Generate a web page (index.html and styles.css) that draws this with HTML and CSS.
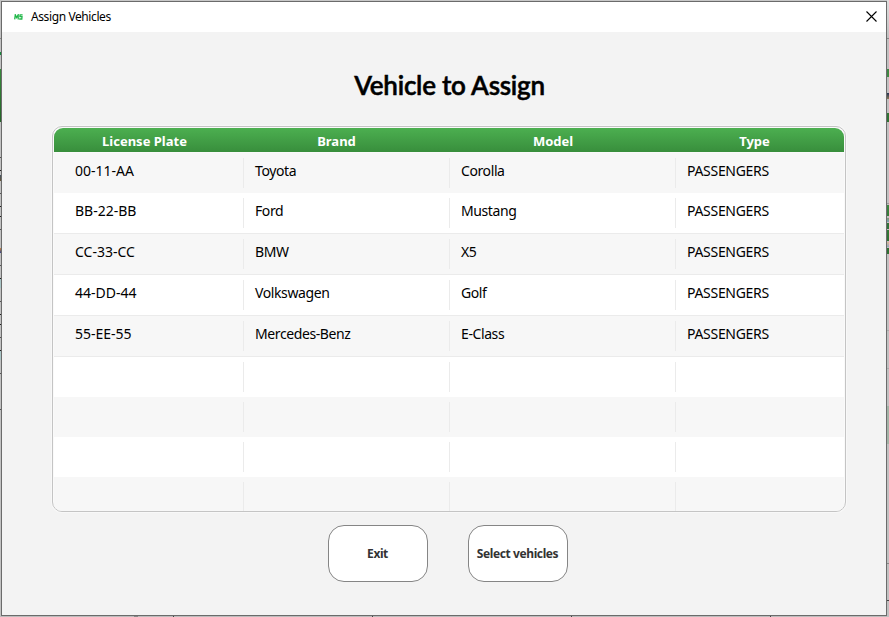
FILE: index.html
```html
<!DOCTYPE html>
<html lang="en">
<head>
<meta charset="utf-8">
<title>Assign Vehicles</title>
<link rel="stylesheet" href="styles.css">
</head>
<body>
<div class="edge edge-left"></div>
<div class="edge edge-right"></div>
<div class="edge edge-bottom"></div>
<main class="window">
  <header class="titlebar">
    <svg class="logo" width="9" height="6" viewBox="0 0 9 6" fill="none" stroke="#22b84a" stroke-width="1.3"><path d="M.7 5.4 1.3.8 2.6 3.6 4.2.8V5.4M8.6.8H6.1L5.9 2.7H8L7.8 5H5.2"/></svg>
    <span class="caption">Assign Vehicles</span>
    <svg class="close" width="11" height="11" viewBox="0 0 11 11" fill="none" stroke="#000" stroke-width="1.1"><path d="M.5.5l10 10M10.5.5l-10 10"/></svg>
  </header>
  <h1 class="heading"><span>Vehicle to Assign</span></h1>
  <section class="table">
    <div class="row head"><span>License Plate</span><span>Brand</span><span>Model</span><span>Type</span></div>
    <div class="row odd"><span>00-11-AA</span><span>Toyota</span><span>Corolla</span><span class="type">PASSENGERS</span></div>
    <div class="row line"><span>BB-22-BB</span><span>Ford</span><span>Mustang</span><span class="type">PASSENGERS</span></div>
    <div class="row odd line"><span>CC-33-CC</span><span>BMW</span><span>X5</span><span class="type">PASSENGERS</span></div>
    <div class="row line"><span>44-DD-44</span><span>Volkswagen</span><span>Golf</span><span class="type">PASSENGERS</span></div>
    <div class="row odd line"><span>55-EE-55</span><span>Mercedes-Benz</span><span>E-Class</span><span class="type">PASSENGERS</span></div>
    <div class="row"><span></span><span></span><span></span><span></span></div>
    <div class="row odd"><span></span><span></span><span></span><span></span></div>
    <div class="row"><span></span><span></span><span></span><span></span></div>
    <div class="row odd last"><span></span><span></span><span></span><span></span></div>
  </section>
  <div class="actions">
    <button>Exit</button>
    <button>Select vehicles</button>
  </div>
</main>
</body>
</html>
```
FILE: styles.css
```css
* { box-sizing: border-box; }
body {
  margin: 0;
  width: 889px;
  height: 617px;
  padding: 1px 2px 1px 1px;
  overflow: hidden;
  position: relative;
  background: #c8c8c8;
  font-family: "Noto Sans", "Open Sans", sans-serif;
  color: #000;
}
.edge { position: absolute; }
.edge-left {
  left: 0; top: 0; width: 2px; height: 617px;
  background:
    linear-gradient(#555, #555) 0 157px / 2px 1px,
    linear-gradient(#222, #222) 0 170px / 2px 1px,
    linear-gradient(#456, #653) 0 175px / 2px 6px,
    linear-gradient(#555, #555) 0 193px / 2px 1px,
    linear-gradient(#222, #222) 0 206px / 2px 1px,
    linear-gradient(#222, #222) 0 216px / 2px 1px,
    linear-gradient(#555, #555) 0 229px / 2px 1px,
    linear-gradient(#c84, #348) 0 248px / 2px 5px,
    linear-gradient(#555, #555) 0 265px / 2px 1px,
    linear-gradient(#222, #222) 0 278px / 2px 1px,
    linear-gradient(#a9c5c6, #a9c5c6) 0 279px / 2px 9px,
    linear-gradient(#555, #555) 0 301px / 2px 1px,
    linear-gradient(#222, #222) 0 314px / 2px 1px,
    linear-gradient(#222, #222) 0 324px / 2px 1px,
    linear-gradient(#555, #555) 0 337px / 2px 1px,
    linear-gradient(#222, #222) 0 350px / 2px 1px,
    linear-gradient(#a9c5c6, #a9c5c6) 0 351px / 2px 9px,
    linear-gradient(#555, #555) 0 373px / 2px 1px,
    linear-gradient(#555, #555) 0 409px / 2px 1px,
    linear-gradient(#888, #888) 0 38px / 2px 1px,
    linear-gradient(#16873a, #16873a) 0 52px / 2px 3px,
    linear-gradient(#388a3c, #246427) 0 69px / 2px 53px,
    #c2c2c2;
  background-repeat: no-repeat;
}
.edge-right {
  left: 887px; top: 0; width: 2px; height: 617px;
  background:
    linear-gradient(#888, #888) 0 38px / 2px 1px,
    linear-gradient(#3f8844, #3f8844) 0 69px / 2px 8px,
    linear-gradient(#235, #875) 0 93px / 2px 6px,
    linear-gradient(#2f7334, #2f7334) 0 113px / 2px 9px,
    linear-gradient(#999, #999) 0 203px / 2px 1px,
    linear-gradient(#3d8742, #347a38) 0 205px / 2px 11px,
    linear-gradient(#7c9a73, #7aa5b5) 0 218px / 2px 4px,
    linear-gradient(#30733a, #30733a) 0 223px / 2px 6px,
    linear-gradient(#347a38, #2f7033) 0 230px / 2px 11px,
    linear-gradient(#d9b893, #8fa9bf) 0 242px / 2px 5px,
    linear-gradient(#2f7033, #2f7033) 0 248px / 2px 6px,
    linear-gradient(#aaa, #aaa) 0 330px / 2px 1px,
    linear-gradient(#aaa, #aaa) 0 368px / 2px 1px,
    linear-gradient(#a3b3a6, #a3b3a6) 0 406px / 2px 38px,
    linear-gradient(#888, #888) 0 563px / 2px 1px,
    linear-gradient(#444, #444) 0 600px / 2px 1px,
    linear-gradient(#dedede, #c0c0c0 38px, #c0c0c0);
  background-repeat: no-repeat;
}
.edge-bottom {
  left: 0; top: 616px; width: 887px; height: 1px;
  background:
    linear-gradient(#888, #888) 134px 0 / 4px 1px,
    linear-gradient(#444, #444) 173px 0 / 1px 1px,
    linear-gradient(#444, #444) 372px 0 / 1px 1px,
    linear-gradient(#444, #444) 571px 0 / 1px 1px,
    linear-gradient(#444, #444) 770px 0 / 1px 1px,
    #bcbcbc;
  background-repeat: no-repeat;
}
.window {
  position: relative;
  width: 886px;
  height: 615px;
  border: 1px solid #6b6b6b;
  background: #f3f3f3;
}
.titlebar {
  display: flex;
  align-items: center;
  height: 30px;
  padding: 0 9px 0 12px;
  background: #fff;
}
.caption {
  flex: 1;
  margin-left: 8px;
  font-size: 12px;
  line-height: 30px;
  letter-spacing: -0.4px;
}
.close { margin-top: -1px; }
.heading {
  display: flex;
  justify-content: center;
  margin: 34px 0 0;
  padding-left: 11px;
  height: 38px;
  font: 600 26px/38px Lato, sans-serif;
  letter-spacing: -0.25px;
  -webkit-text-stroke: 0.5px #000;
}
.table {
  width: 794px;
  height: 386px;
  margin: 22px 0 0 50px;
  border: 1px solid #c4c4c4;
  border-radius: 10px;
  padding: 1px 1px 0;
  background: #fafafa;
  box-shadow: 0 0 0 1px #f8f8f8;
  overflow: hidden;
}
.row {
  display: grid;
  grid-template-columns: 190px 206px 226px 168px;
  height: 40px;
  padding: 5px 0;
  background: #fff;
  font-size: 14px;
  line-height: 25px;
}
.row span {
  height: 30px;
  padding-left: 11px;
  border-right: 1px solid #ebebeb;
  letter-spacing: -0.4px;
}
.row span:first-child { padding-left: 21px; letter-spacing: 0; }
.row span.type { letter-spacing: -0.3px; }
.row span:last-child { border-right: 0; }
.row.odd { background: #f7f7f7; }
.row.line { height: 41px; border-bottom: 1px solid #ebebeb; }
.row.last { height: 34px; padding-bottom: 1px; }
.row.head {
  grid-template-columns: 181px 203px 230px 173px;
  height: 24px;
  margin-bottom: 1px;
  padding: 0;
  background: linear-gradient(#4caf50, #388e3c);
  border-radius: 9px 9px 0 0;
  color: #fff;
  font-weight: 700;
  font-size: 13px;
  line-height: 26px;
}
.row.head span {
  height: 24px;
  padding: 0;
  border: 0;
  text-align: center;
  letter-spacing: 0;
}
.actions {
  display: flex;
  gap: 40px;
  margin: 13px 0 0 326px;
}
button {
  width: 100px;
  height: 57px;
  padding: 0 1px 0 0;
  border: 1px solid #858585;
  border-radius: 16px;
  background: #fff;
  color: #333;
  font: 700 12px "Noto Sans", sans-serif;
  letter-spacing: -0.4px;
  white-space: nowrap;
}
```
